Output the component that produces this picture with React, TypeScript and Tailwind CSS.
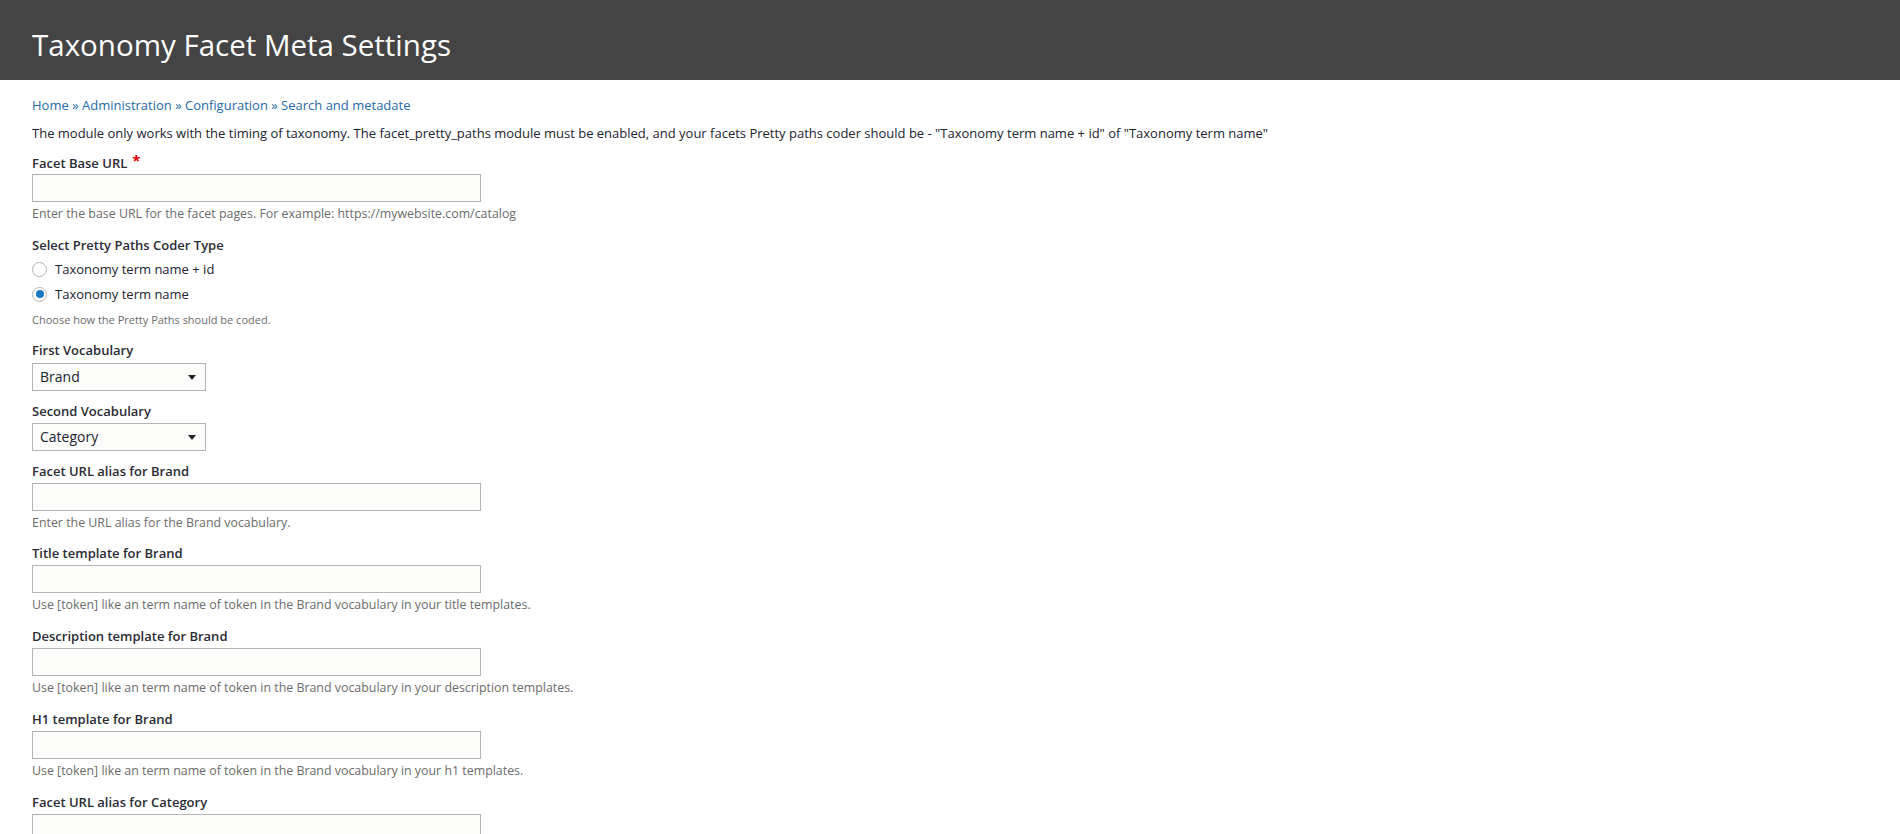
import React from "react";

const font = { fontFamily: '"Open Sans", "Liberation Sans", sans-serif' };

function Label({ children, required, className = "" }: { children: React.ReactNode; required?: boolean; className?: string }) {
  return (
    <div className={`h-5 leading-5 text-[13px] font-semibold text-[#2a2b33] ${className}`}>
      {children}
      {required && <span className="ml-[5px] text-[#e00000] text-[15px] font-bold relative top-[-2px]">*</span>}
    </div>
  );
}

function TextInput() {
  return <div className="mt-[2px] h-[28px] w-[449px] border border-[#b4b4b4] bg-[#fcfcfa]" />;
}

function Help({ children, className = "mt-[4px] text-[12.4px]" }: { children: React.ReactNode; className?: string }) {
  return <div className={`h-4 leading-4 text-[#6b6b6b] ${className}`}>{children}</div>;
}

function SelectBox({ value, className = "" }: { value: string; className?: string }) {
  return (
    <div className={`h-[28px] w-[174px] border border-[#b4b4b4] bg-[#fcfcfa] flex items-center justify-between pl-[7px] pr-[9px] ${className}`}>
      <span className="text-[14px] text-[#222330] leading-none">{value}</span>
      <svg width="8" height="5" viewBox="0 0 8 5"><path d="M0 0 L8 0 L4 5 Z" fill="#222" /></svg>
    </div>
  );
}

function Radio({ checked, label, className = "" }: { checked?: boolean; label: string; className?: string }) {
  return (
    <div className={`h-5 flex items-center ${className}`}>
      <div className="w-[15px] h-[15px] rounded-full border border-[#b3b3b3] bg-white flex items-center justify-center">
        {checked && <div className="w-[8px] h-[8px] rounded-full bg-[#1a78c2]" />}
      </div>
      <span className="ml-[8px] text-[13px] text-[#222330] leading-5">{label}</span>
    </div>
  );
}

function TemplateField({ label, help, className = "mt-[13px]" }: { label: string; help?: string; className?: string }) {
  return (
    <div className={className}>
      <Label>{label}</Label>
      <TextInput />
      {help && <Help>{help}</Help>}
    </div>
  );
}

export default function App() {
  return (
    <div className="w-[1900px] h-[834px] overflow-hidden bg-white" style={font}>
      <header className="h-[80px] bg-[#444444] pl-8 pt-[25px]">
        <h1 className="text-[29.5px] leading-[40px] font-normal text-white">Taxonomy Facet Meta Settings</h1>
      </header>
      <main className="pl-8">
        <nav className="mt-[15px] h-5 leading-5 text-[13px] text-[#1f6aa5]">
          <span>Home</span> » <span>Administration</span> » <span>Configuration</span> » <span>Search and metadate</span>
        </nav>
        <p className="mt-[8px] h-5 leading-5 text-[13px] text-[#222330]">
          The module only works with the timing of taxonomy. The facet_pretty_paths module must be enabled, and your facets Pretty paths coder should be - "Taxonomy term name + id" of "Taxonomy term name"
        </p>

        <div className="mt-[9px]">
          <Label required>Facet Base URL</Label>
          <TextInput />
          <Help>Enter the base URL for the facet pages. For example: https://mywebsite.com/catalog</Help>
        </div>

        <div className="mt-[13px]">
          <Label>Select Pretty Paths Coder Type</Label>
          <Radio className="mt-[4px]" label="Taxonomy term name + id" />
          <Radio className="mt-[5px]" checked label="Taxonomy term name" />
          <Help className="mt-[8px] text-[11px]">Choose how the Pretty Paths should be coded.</Help>
        </div>

        <div className="mt-[12px]">
          <Label>First Vocabulary</Label>
          <SelectBox className="mt-[3px]" value="Brand" />
        </div>

        <div className="mt-[10px]">
          <Label>Second Vocabulary</Label>
          <SelectBox className="mt-[2px]" value="Category" />
        </div>

        <TemplateField className="mt-[10px]" label="Facet URL alias for Brand" help="Enter the URL alias for the Brand vocabulary." />
        <TemplateField className="mt-[12px]" label="Title template for Brand" help="Use [token] like an term name of token in the Brand vocabulary in your title templates." />
        <TemplateField label="Description template for Brand" help="Use [token] like an term name of token in the Brand vocabulary in your description templates." />
        <TemplateField label="H1 template for Brand" help="Use [token] like an term name of token in the Brand vocabulary in your h1 templates." />
        <TemplateField label="Facet URL alias for Category" />
      </main>
    </div>
  );
}
